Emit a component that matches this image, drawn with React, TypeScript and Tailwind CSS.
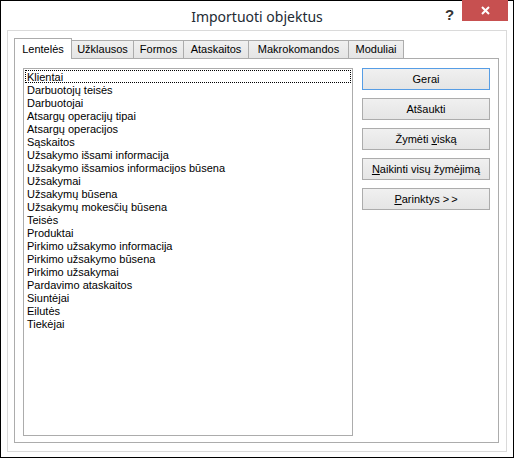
import React from "react";

const tables = [
  "Klientai",
  "Darbuotojų teisės",
  "Darbuotojai",
  "Atsargų operacijų tipai",
  "Atsargų operacijos",
  "Sąskaitos",
  "Užsakymo išsami informacija",
  "Užsakymo išsamios informacijos būsena",
  "Užsakymai",
  "Užsakymų būsena",
  "Užsakymų mokesčių būsena",
  "Teisės",
  "Produktai",
  "Pirkimo užsakymo informacija",
  "Pirkimo užsakymo būsena",
  "Pirkimo užsakymai",
  "Pardavimo ataskaitos",
  "Siuntėjai",
  "Eilutės",
  "Tiekėjai",
];

const tabs = [
  { label: "Lentelės", w: "w-[58px]" },
  { label: "Užklausos", w: "w-[63px]" },
  { label: "Formos", w: "w-[51px]" },
  { label: "Ataskaitos", w: "w-[66px]" },
  { label: "Makrokomandos", w: "w-[101px]" },
  { label: "Moduliai", w: "w-[56px]" },
];

const DialogButton: React.FC<{ focused?: boolean; children: React.ReactNode }> = ({
  focused,
  children,
}) => (
  <button
    className={`flex h-[22px] w-[128px] items-center justify-center border bg-gradient-to-b from-[#f0f0f0] to-[#e5e5e5] text-[11px] text-black ${
      focused ? "border-[#569de5]" : "border-[#acacac]"
    }`}
  >
    {children}
  </button>
);

export default function App() {
  return (
    <div
      className="flex h-[458px] w-[514px] flex-col border border-black bg-white text-[11px] text-black"
      style={{ fontFamily: '"Liberation Sans", Arial, sans-serif' }}
    >
      {/* title bar */}
      <div className="relative flex h-[29px] shrink-0 items-center justify-center pt-[2px]">
        <span
          className="text-[14px] text-[#222a33]"
          style={{ fontFamily: '"Noto Sans", "Open Sans", sans-serif' }}
        >
          Importuoti objektus
        </span>
        <span className="absolute left-[444px] top-[3px] text-[15px] font-bold text-[#333]">?</span>
        <div className="absolute left-[461px] top-[-1px] flex h-[21px] w-[46px] items-center justify-center bg-[#c75050]">
          <svg width="9" height="9" viewBox="0 0 9 9">
            <path d="M1 1 L8 8 M8 1 L1 8" stroke="white" strokeWidth="2" />
          </svg>
        </div>
      </div>

      {/* frame */}
      <div className="mx-[6px] mb-[5px] flex flex-1 flex-col border border-[#dadada] pb-[8px] pl-[6px] pr-[7px] pt-[7px]">
        {/* tabs */}
        <div className="relative z-10 flex h-[21px] items-end">
          {tabs.map((t, i) =>
            i === 0 ? (
              <div
                key={t.label}
                className={`${t.w} flex h-[21px] items-start justify-center border border-b-0 border-[#acacac] bg-white pt-[2px]`}
              >
                {t.label}
              </div>
            ) : (
              <div
                key={t.label}
                className={`${t.w} -ml-px flex h-[19px] items-center justify-center border border-[#acacac] bg-gradient-to-b from-[#f0f0f0] to-[#e5e5e5]`}
              >
                {t.label}
              </div>
            )
          )}
        </div>

        {/* tab panel */}
        <div className="-mt-px flex flex-1 border border-[#acacac] bg-white pb-[6px] pl-[8px] pr-[7px] pt-[9px]">
          <div className="h-[368px] w-[330px] border border-[#acacac] pl-[1px] pt-[1px]">
            {tables.map((t, i) => (
              <div
                key={t}
                className={`h-[13px] pl-[1px] leading-[12px] ${
                  i === 0 ? "mr-[1px] border border-dotted border-black pl-0" : "border border-transparent"
                }`}
              >
                {t}
              </div>
            ))}
          </div>
          <div className="ml-[9px] flex flex-col gap-[8px]">
            <DialogButton focused>Gerai</DialogButton>
            <DialogButton>Atšaukti</DialogButton>
            <DialogButton>
              Žymėti&nbsp;<u>v</u>iską
            </DialogButton>
            <DialogButton>
              <u>N</u>aikinti visų žymėjimą
            </DialogButton>
            <DialogButton>
              <u>P</u>arinktys &gt;<span className="ml-[2px]">&gt;</span>
            </DialogButton>
          </div>
        </div>
      </div>
    </div>
  );
}
